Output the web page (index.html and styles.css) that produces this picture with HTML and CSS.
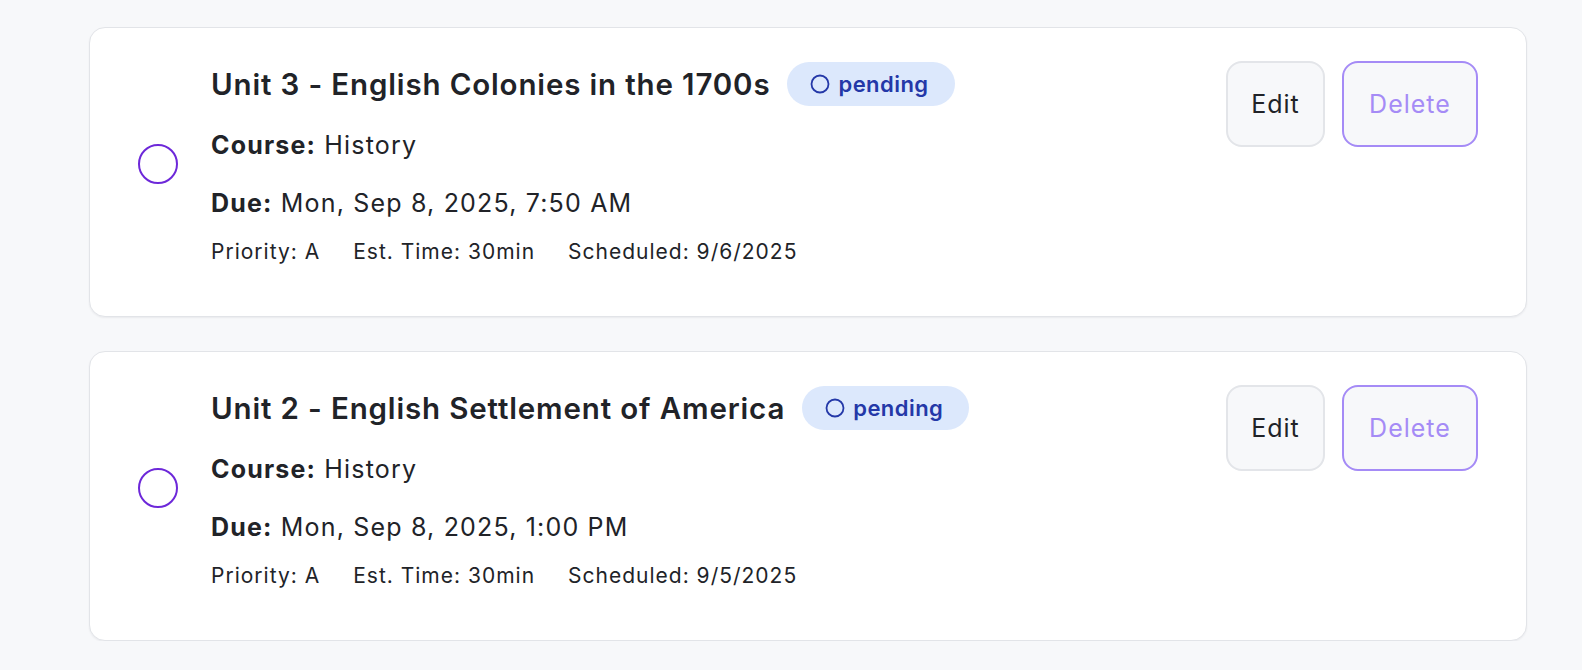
FILE: index.html
```html
<!DOCTYPE html>
<html lang="en">
<head>
<meta charset="utf-8">
<title>Assignments</title>
<link rel="stylesheet" href="styles.css">
</head>
<body>
<main class="list">
  <article class="card">
    <div class="main">
      <button class="check" aria-label="Mark complete"></button>
      <div class="content">
        <div class="title-row">
          <h2 class="title">Unit 3 - English Colonies in the 1700s</h2>
          <span class="badge">
            <svg class="badge-icon" viewBox="0 0 20 20" width="20" height="20"><circle cx="10" cy="10" r="8.5" fill="none" stroke="currentColor" stroke-width="1.8"/></svg>
            pending
          </span>
        </div>
        <p class="line"><strong>Course:</strong> History</p>
        <p class="line"><strong>Due:</strong> Mon, Sep 8, 2025, 7:50 AM</p>
        <div class="meta">
          <span>Priority: A</span>
          <span>Est. Time: 30min</span>
          <span>Scheduled: 9/6/2025</span>
        </div>
      </div>
    </div>
    <div class="actions">
      <button class="btn btn-edit">Edit</button>
      <button class="btn btn-delete">Delete</button>
    </div>
  </article>

  <article class="card">
    <div class="main">
      <button class="check" aria-label="Mark complete"></button>
      <div class="content">
        <div class="title-row">
          <h2 class="title">Unit 2 - English Settlement of America</h2>
          <span class="badge">
            <svg class="badge-icon" viewBox="0 0 20 20" width="20" height="20"><circle cx="10" cy="10" r="8.5" fill="none" stroke="currentColor" stroke-width="1.8"/></svg>
            pending
          </span>
        </div>
        <p class="line"><strong>Course:</strong> History</p>
        <p class="line"><strong>Due:</strong> Mon, Sep 8, 2025, 1:00 PM</p>
        <div class="meta">
          <span>Priority: A</span>
          <span>Est. Time: 30min</span>
          <span>Scheduled: 9/5/2025</span>
        </div>
      </div>
    </div>
    <div class="actions">
      <button class="btn btn-edit">Edit</button>
      <button class="btn btn-delete">Delete</button>
    </div>
  </article>
</main>
</body>
</html>
```
FILE: styles.css
```css
* { box-sizing: border-box; }

html, body {
  margin: 0;
  background: #f7f8fa;
}

body {
  font-family: Inter, "Noto Sans", "Liberation Sans", sans-serif;
  color: #212328;
}

.list {
  display: flex;
  flex-direction: column;
  gap: 34px;
  width: 1438px;
  margin-left: 89px;
  padding-top: 27px;
}

.card {
  display: flex;
  align-items: flex-start;
  justify-content: space-between;
  height: 290px;
  padding: 33px 48px 0 48px;
  background: #ffffff;
  border: 1px solid #e2e4e8;
  border-radius: 16px;
  box-shadow: 0 1px 2px rgba(16, 24, 40, 0.06);
}

.main {
  display: flex;
  align-items: center;
  gap: 33px;
}

.check {
  flex: none;
  width: 40px;
  height: 40px;
  padding: 0;
  border: 2px solid #6d28d9;
  border-radius: 50%;
  background: #ffffff;
}

.content {
  display: flex;
  flex-direction: column;
  padding-top: 1px;
}

.title-row {
  display: flex;
  align-items: center;
  gap: 17px;
  height: 44px;
  margin-bottom: 21px;
}

.title {
  margin: 0;
  font-size: 29.5px;
  font-weight: 600;
  letter-spacing: 0.85px;
  line-height: 44px;
  color: #212328;
}

.badge {
  display: inline-flex;
  align-items: center;
  gap: 8px;
  height: 44px;
  padding: 0 26px 0 23px;
  border-radius: 22px;
  background: #dce8fc;
  color: #2438a8;
  font-size: 22px;
  font-weight: 600;
  letter-spacing: 0.45px;
}

.badge-icon {
  display: block;
}

.line {
  margin: 0 0 22px 0;
  font-size: 25px;
  letter-spacing: 1.18px;
  line-height: 36px;
}

.line strong {
  font-weight: 700;
}

.meta {
  display: flex;
  gap: 33px;
  margin-top: -6px;
  font-size: 21px;
  letter-spacing: 1px;
  line-height: 30px;
}

.actions {
  display: flex;
  gap: 17px;
}

.btn {
  height: 86px;
  padding: 0;
  border-radius: 16px;
  background: #f7f8fa;
  font-family: Inter, "Noto Sans", "Liberation Sans", sans-serif;
  font-size: 25px;
  font-weight: 400;
  letter-spacing: 1px;
}

.btn-edit {
  width: 99px;
  border: 2px solid #e3e5e9;
  color: #212328;
}

.btn-delete {
  width: 136px;
  border: 2px solid #a58bf6;
  color: #a58bf6;
}
```
